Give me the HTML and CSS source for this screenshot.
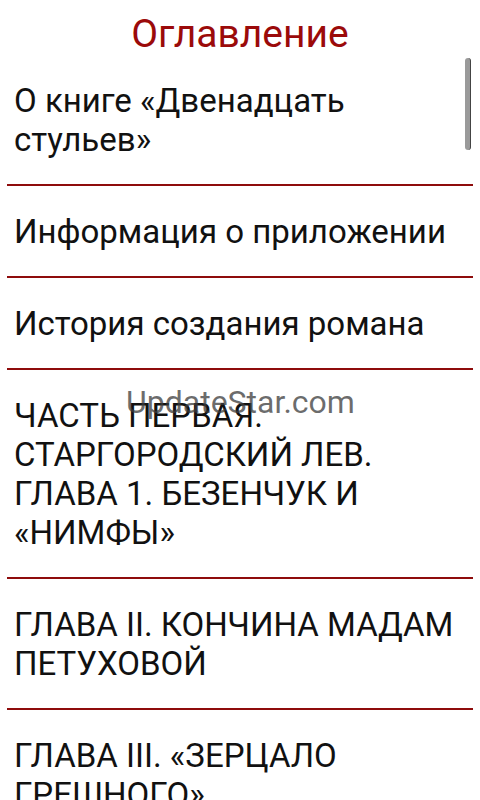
FILE: index.html
```html
<!DOCTYPE html>
<html lang="ru">
<head>
<meta charset="utf-8">
<link rel="stylesheet" href="styles.css">
</head>
<body>
<div class="screen">
  <header class="header">Оглавление</header>
  <ul class="toc">
    <li class="item">О книге «Двенадцать стульев»</li>
    <li class="item">Информация о приложении</li>
    <li class="item">История создания романа</li>
    <li class="item">ЧАСТЬ ПЕРВАЯ. СТАРГОРОДСКИЙ ЛЕВ. ГЛАВА 1. БЕЗЕНЧУК И «НИМФЫ»</li>
    <li class="item">ГЛАВА II. КОНЧИНА МАДАМ ПЕТУХОВОЙ</li>
    <li class="item">ГЛАВА III. «ЗЕРЦАЛО ГРЕШНОГО»</li>
  </ul>
  <div class="scrollbar"></div>
  <div class="watermark">UpdateStar.com</div>
</div>
</body>
</html>
```
FILE: styles.css
```css
html, body {
  margin: 0;
  padding: 0;
  background: #fff;
}
.screen {
  position: relative;
  width: 480px;
  height: 800px;
  overflow: hidden;
  font-family: Roboto, "Noto Sans", sans-serif;
}
.header {
  height: 55px;
  box-sizing: border-box;
  padding-top: 12px;
  text-align: center;
  color: #9b0a0a;
  font-size: 39px;
  line-height: 44px;
}
.toc {
  list-style: none;
  margin: 0;
  padding: 0 7px;
}
.item {
  padding: 26px 12px 25px 7px;
  font-size: 33px;
  line-height: 39px;
  color: #111;
  border-bottom: 2px solid #8e0c0c;
}
.scrollbar {
  position: absolute;
  left: 465px;
  top: 58px;
  width: 6px;
  height: 92px;
  border-radius: 3px;
  background: #9a9a9a;
  border-right: 1px solid #444;
  box-sizing: border-box;
}
.watermark {
  position: absolute;
  left: 126px;
  top: 384px;
  font-size: 32px;
  line-height: 36px;
  color: rgba(60, 60, 60, 0.75);
}
```
